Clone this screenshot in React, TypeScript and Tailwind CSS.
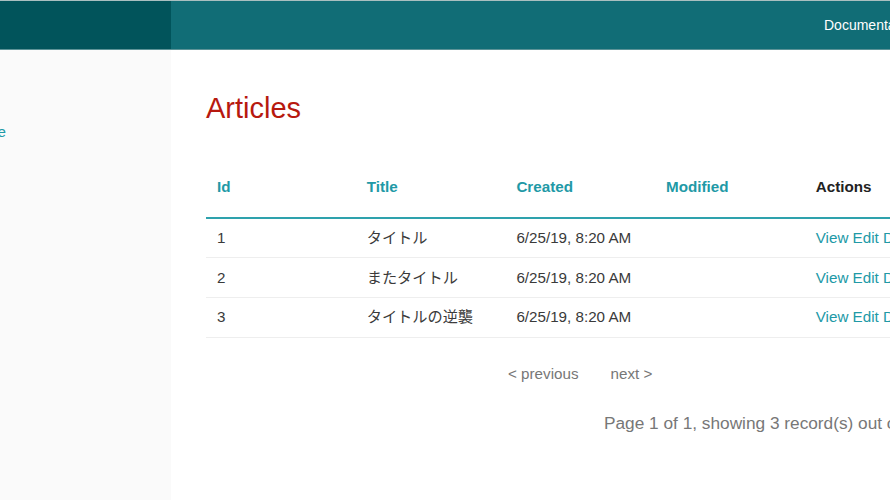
const font = "font-['Liberation_Sans','Noto_Sans_CJK_JP',sans-serif]";

const articles = [
    { id: 1, title: 'タイトル', created: '6/25/19, 8:20 AM' },
    { id: 2, title: 'またタイトル', created: '6/25/19, 8:20 AM' },
    { id: 3, title: 'タイトルの逆襲', created: '6/25/19, 8:20 AM' },
];

export default function App() {
    return (
        <div className={`${font} h-[500px] w-[890px] overflow-hidden bg-white text-[15.2px] text-[#3a3a3a]`}>
            <div className="flex h-[50px] border-t border-b border-t-[#a9bfc0] border-b-[#5c9397]">
                <div className="w-[171px] shrink-0 bg-[#01545b]" />
                <div className="flex flex-1 items-center overflow-hidden bg-[#116d76] pl-[653px]">
                    <span className="whitespace-nowrap text-sm text-white">Documentation</span>
                </div>
            </div>
            <div className="flex h-[450px]">
                <div className="w-[171px] shrink-0 overflow-hidden bg-[#fafafa] pt-[72px]">
                    <a className="-ml-[70px] block whitespace-nowrap leading-[20px] text-[#2199a6]">New Article</a>
                </div>
                <div className="w-[719px] overflow-hidden pl-[35px]">
                    <h3 className="mt-[41px] text-[29px] leading-[34px] text-[#b7190f]">Articles</h3>
                    <table className="mt-[36px] w-[760px] table-fixed border-collapse">
                        <thead>
                            <tr className="h-[57px] border-b-2 border-[#2ea2ad] text-left align-top font-bold">
                                <th className="w-[149.7px] pl-[11px] pt-[15px] text-[#2199a6]">Id</th>
                                <th className="w-[149.7px] pl-[11px] pt-[15px] text-[#2199a6]">Title</th>
                                <th className="w-[149.7px] pl-[11px] pt-[15px] text-[#2199a6]">Created</th>
                                <th className="w-[149.7px] pl-[11px] pt-[15px] text-[#2199a6]">Modified</th>
                                <th className="pl-[11px] pt-[15px] text-[#222]">Actions</th>
                            </tr>
                        </thead>
                        <tbody>
                            {articles.map((a) => (
                                <tr key={a.id} className="h-[39.7px] border-b border-[#eeeeee]">
                                    <td className="pl-[11px] pt-[1px]">{a.id}</td>
                                    <td className="pl-[11px] pt-[1px]">{a.title}</td>
                                    <td className="whitespace-nowrap pl-[11px] pt-[1px]">{a.created}</td>
                                    <td className="pl-[11px]" />
                                    <td className="whitespace-nowrap pl-[11px] pt-[1px] text-[#2199a6]">View Edit Delete</td>
                                </tr>
                            ))}
                        </tbody>
                    </table>
                    <div className="mt-[26px] flex gap-[32px] pl-[302px] leading-[20px] text-[#777]">
                        <span>&lt; previous</span>
                        <span>next &gt;</span>
                    </div>
                    <p className="mt-[29px] whitespace-nowrap pl-[398px] text-[17.25px] leading-[20px] text-[#777]">
                        Page 1 of 1, showing 3 record(s) out of 3 total
                    </p>
                </div>
            </div>
        </div>
    );
}
